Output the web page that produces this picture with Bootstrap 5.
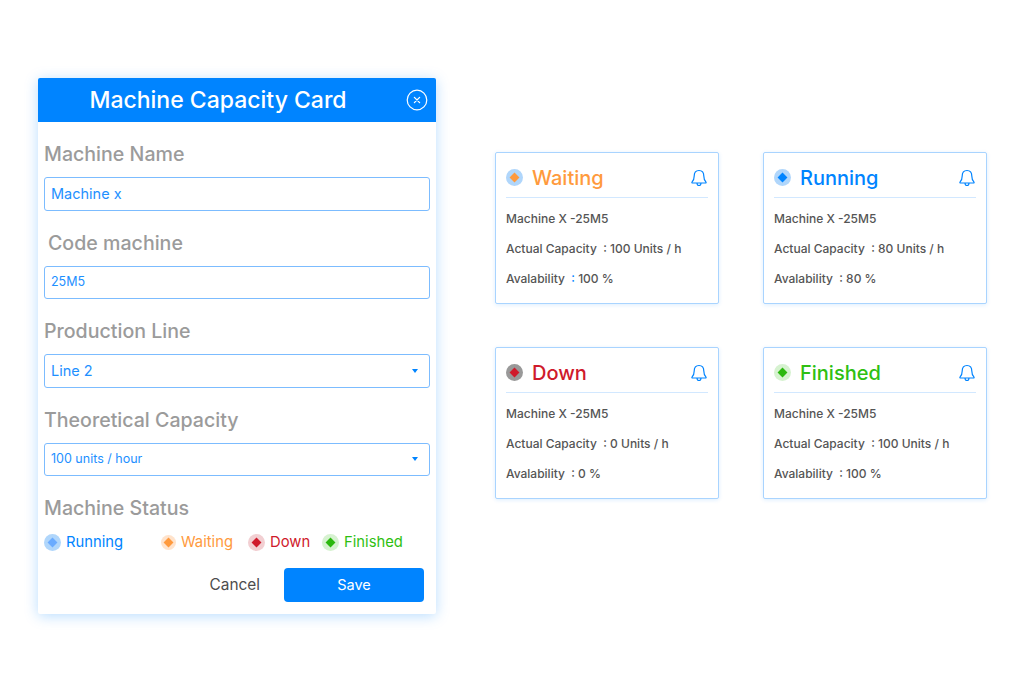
<!DOCTYPE html>
<html lang="en">
<head>
<meta charset="utf-8">
<title>Machine Capacity Card</title>
<link href="https://cdn.jsdelivr.net/npm/bootstrap@5.3.0/dist/css/bootstrap.min.css" rel="stylesheet">
<style>
html,body{height:683px;overflow:hidden;background:#fff}
body{font-family:Inter,"Liberation Sans",sans-serif;color:#4d4d4d}
.stage{padding:78px 0 0 38px;gap:59px}
.panel{width:398px;height:536px;border-radius:2px;box-shadow:0 2px 14px rgba(0,132,255,.28)}
.panel-head{height:44px;background:#0084ff;color:#fff;border-radius:2px 2px 0 0;font-size:23px;font-weight:500;padding-right:38px}
.close-ic{right:8px;top:11px;width:22px;height:22px}
.panel-body{padding:0 6px}
.field-title{font-size:19.600px;font-weight:500;color:#9b9b9b;line-height:28px;margin:0 0 9px}
.field-box{width:386px;height:33.500px;border:1px solid #7cbcff;border-radius:3px;color:#1e90ff;padding:0 6px;font-size:14.500px;background:#fff;margin-bottom:18px}
.field-box.tiny{font-size:12.500px}
.caret-ic{width:0;height:0;border-left:3.500px solid transparent;border-right:3.500px solid transparent;border-top:4px solid #0084ff;margin-right:5px}
.status-dot{width:17px;height:17px;border-radius:50%;flex:none}
.status-dot.small-dot{width:15px;height:15px}
.status-dot i{width:7px;height:7px;transform:rotate(45deg);display:block}
.st-run{color:#0084ff}.st-wait{color:#ff9a3d}.st-down{color:#cf1a2b}.st-fin{color:#2fbf12}
.ring-run{background:#b0d6fb}.ring-wait{background:#ffe3cc}.ring-down{background:#f2cfd2}.ring-fin{background:#d6f2d0}
.ring-gray{background:#999}
.fill-run{background:#0084ff}.fill-run-soft{background:#6aabff}.fill-wait{background:#ff9a3d}.fill-down{background:#cf1a2b}.fill-fin{background:#2cb80f}
.status-row{font-size:14.800px;height:18px;margin-top:11px}
.status-item{gap:5px}
.w-a{width:117px}.w-b{width:87px}.w-c{width:74px}
.act-row{margin-top:17px;padding-right:6px;gap:24px}
.cancel-txt{font-size:15.400px;color:#4d4d4d}
.save-btn{width:140px;height:34px;background:#0084ff;border-radius:4px;color:#fff;font-size:14.500px}
.cards-grid{display:grid;grid-template-columns:224px 224px;grid-auto-rows:152px;gap:43px 44px;margin-top:74px;align-self:flex-start}
.mini{border:1px solid #a9d4ff;border-radius:2px;padding:0 10px;box-shadow:0 1px 4px rgba(0,132,255,.14);background:#fff}
.mini-head{height:45px;padding-top:5px;border-bottom:1px solid #d2e8ff;gap:9px}
.mini-title{font-size:20px;font-weight:500;line-height:1}
.mini-lines{font-size:12px;color:#555;font-weight:500;line-height:30px;padding-top:6px}
.bell-ic{width:18px;height:18px;margin-left:auto}
.sep-blue{color:#0084ff}
</style>
</head>
<body class="m-0">
<div class="stage d-flex">
  <div class="panel bg-white position-relative">
    <div class="panel-head d-flex align-items-center justify-content-center position-relative">
      <span>Machine Capacity Card</span>
      <svg class="close-ic position-absolute" viewBox="0 0 22 22" fill="none" stroke="#fff"><circle cx="11" cy="11" r="9.800" stroke-width="1.200"/><path d="M8.400 8.400l5.200 5.200M13.600 8.400l-5.200 5.200" stroke-width="1.300" stroke-linecap="round"/></svg>
    </div>
    <div class="panel-body">
      <h2 class="field-title" style="margin-top:18px">Machine Name</h2>
      <div class="field-box d-flex align-items-center">Machine x</div>
      <h2 class="field-title ps-1">Code machine</h2>
      <div class="field-box tiny d-flex align-items-center">25M5</div>
      <h2 class="field-title">Production Line</h2>
      <div class="field-box d-flex align-items-center justify-content-between"><span>Line 2</span><span class="caret-ic"></span></div>
      <h2 class="field-title">Theoretical Capacity</h2>
      <div class="field-box tiny d-flex align-items-center justify-content-between"><span>100 units / hour</span><span class="caret-ic"></span></div>
      <h2 class="field-title">Machine Status</h2>
      <div class="status-row d-flex align-items-center">
        <div class="status-item w-a d-flex align-items-center st-run"><span class="status-dot ring-run d-flex align-items-center justify-content-center"><i class="fill-run-soft"></i></span>Running</div>
        <div class="status-item w-b d-flex align-items-center st-wait"><span class="status-dot small-dot ring-wait d-flex align-items-center justify-content-center"><i class="fill-wait"></i></span>Waiting</div>
        <div class="status-item w-c d-flex align-items-center st-down"><span class="status-dot ring-down d-flex align-items-center justify-content-center"><i class="fill-down"></i></span>Down</div>
        <div class="status-item d-flex align-items-center st-fin"><span class="status-dot ring-fin d-flex align-items-center justify-content-center"><i class="fill-fin"></i></span>Finished</div>
      </div>
      <div class="act-row d-flex align-items-center justify-content-end">
        <span class="cancel-txt">Cancel</span>
        <span class="save-btn d-flex align-items-center justify-content-center">Save</span>
      </div>
    </div>
  </div>
  <div class="cards-grid">
    <div class="mini">
      <div class="mini-head d-flex align-items-center"><span class="status-dot ring-run d-flex align-items-center justify-content-center"><i class="fill-wait"></i></span><span class="mini-title st-wait">Waiting</span>
        <svg class="bell-ic" viewBox="0 0 18 18" fill="none" stroke="#0084ff" stroke-width="1.200" stroke-linejoin="round" stroke-linecap="round"><path d="M9 1.500c-3.200 0-4.800 2.500-4.800 5.500 0 3.300-.9 4.800-2.200 6.200-.3.400 0 .8.400.8h13.200c.4 0 .7-.4.400-.8-1.300-1.400-2.200-2.900-2.200-6.200 0-3-1.600-5.500-4.800-5.500zM7 14c0 1.400.9 2.500 2 2.500s2-1.100 2-2.500"/></svg></div>
      <div class="mini-lines"><div>Machine X -25M5</div><div>Actual Capacity &nbsp;: 100 Units / h</div><div>Avalability &nbsp;<span class="sep-blue">:</span> 100 %</div></div>
    </div>
    <div class="mini">
      <div class="mini-head d-flex align-items-center"><span class="status-dot ring-run d-flex align-items-center justify-content-center"><i class="fill-run"></i></span><span class="mini-title st-run">Running</span>
        <svg class="bell-ic" viewBox="0 0 18 18" fill="none" stroke="#0084ff" stroke-width="1.200" stroke-linejoin="round" stroke-linecap="round"><path d="M9 1.500c-3.200 0-4.800 2.500-4.800 5.500 0 3.300-.9 4.800-2.200 6.200-.3.400 0 .8.400.8h13.200c.4 0 .7-.4.400-.8-1.300-1.400-2.200-2.900-2.200-6.200 0-3-1.600-5.500-4.800-5.500zM7 14c0 1.400.9 2.500 2 2.500s2-1.100 2-2.500"/></svg></div>
      <div class="mini-lines"><div>Machine X -25M5</div><div>Actual Capacity &nbsp;: 80 Units / h</div><div>Avalability &nbsp;: 80 %</div></div>
    </div>
    <div class="mini">
      <div class="mini-head d-flex align-items-center"><span class="status-dot ring-gray d-flex align-items-center justify-content-center"><i class="fill-down"></i></span><span class="mini-title st-down">Down</span>
        <svg class="bell-ic" viewBox="0 0 18 18" fill="none" stroke="#0084ff" stroke-width="1.200" stroke-linejoin="round" stroke-linecap="round"><path d="M9 1.500c-3.200 0-4.800 2.500-4.800 5.500 0 3.300-.9 4.800-2.200 6.200-.3.400 0 .8.400.8h13.200c.4 0 .7-.4.400-.8-1.300-1.400-2.200-2.900-2.200-6.200 0-3-1.600-5.500-4.800-5.500zM7 14c0 1.400.9 2.500 2 2.500s2-1.100 2-2.500"/></svg></div>
      <div class="mini-lines"><div>Machine X -25M5</div><div>Actual Capacity &nbsp;: 0 Units / h</div><div>Avalability &nbsp;: 0 %</div></div>
    </div>
    <div class="mini">
      <div class="mini-head d-flex align-items-center"><span class="status-dot ring-fin d-flex align-items-center justify-content-center"><i class="fill-fin"></i></span><span class="mini-title st-fin">Finished</span>
        <svg class="bell-ic" viewBox="0 0 18 18" fill="none" stroke="#0084ff" stroke-width="1.200" stroke-linejoin="round" stroke-linecap="round"><path d="M9 1.500c-3.200 0-4.800 2.500-4.800 5.500 0 3.300-.9 4.800-2.200 6.200-.3.400 0 .8.400.8h13.200c.4 0 .7-.4.400-.8-1.300-1.400-2.200-2.900-2.200-6.200 0-3-1.600-5.500-4.800-5.500zM7 14c0 1.400.9 2.500 2 2.500s2-1.100 2-2.500"/></svg></div>
      <div class="mini-lines"><div>Machine X -25M5</div><div>Actual Capacity &nbsp;: 100 Units / h</div><div>Avalability &nbsp;: 100 %</div></div>
    </div>
  </div>
</div>
<script src="https://cdn.jsdelivr.net/npm/bootstrap@5.3.0/dist/js/bootstrap.bundle.min.js"></script>
</body>
</html>
